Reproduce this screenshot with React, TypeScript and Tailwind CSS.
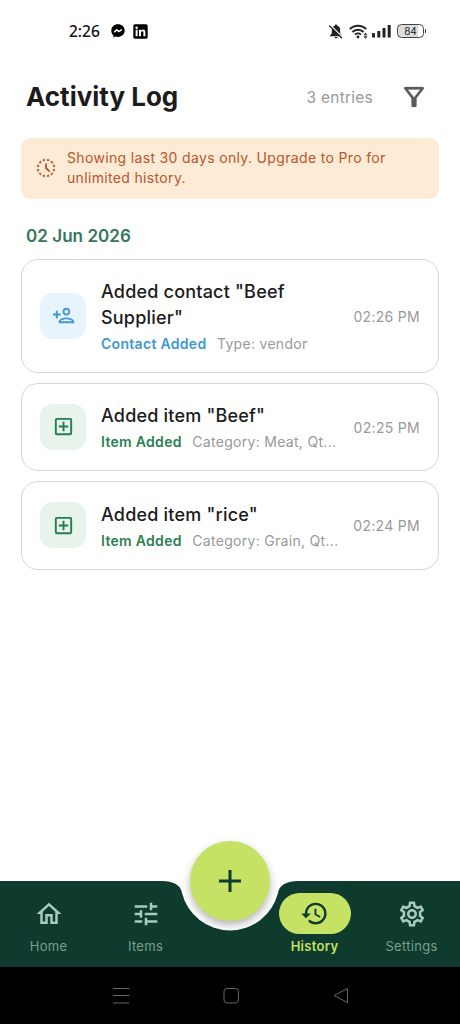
import React from "react";
import {
  MdHistory,
  MdHistoryToggleOff,
  MdOutlineAddBox,
  MdOutlineSettings,
  MdTune,
} from "react-icons/md";

const entries = [
  {
    title: 'Added contact "Beef Supplier"',
    kind: "contact",
    label: "Contact Added",
    detail: "Type: vendor",
    time: "02:26 PM",
  },
  {
    title: 'Added item "Beef"',
    kind: "item",
    label: "Item Added",
    detail: "Category: Meat, Qt...",
    time: "02:25 PM",
  },
  {
    title: 'Added item "rice"',
    kind: "item",
    label: "Item Added",
    detail: "Category: Grain, Qt...",
    time: "02:24 PM",
  },
];

const HomeIcon = () => (
  <svg viewBox="0 0 24 24" className="size-[30px]" fill="currentColor">
    <path d="M12 5.69l5 4.5V18h-2v-6H9v6H7v-7.81l5-4.5M12 3L2 12h3v8h6v-6h2v6h6v-8h3L12 3z" />
  </svg>
);

const PersonAddIcon = () => (
  <svg viewBox="0 0 24 24" className="size-[23px]" fill="currentColor">
    <path d="M15 12c2.21 0 4-1.79 4-4s-1.79-4-4-4-4 1.79-4 4 1.79 4 4 4zm0-6c1.1 0 2 .9 2 2s-.9 2-2 2-2-.9-2-2 .9-2 2-2zm0 8c-2.67 0-8 1.34-8 4v2h16v-2c0-2.66-5.33-4-8-4zm-6 4c.22-.72 3.31-2 6-2 2.7 0 5.8 1.29 6 2H9zm-3-3v-3h3v-2H6V7H4v3H1v2h3v3z" />
  </svg>
);

const FilterIcon = () => (
  <svg viewBox="0 0 24 24" className="size-[30px]" fill="currentColor">
    <path
      d="M7 6h10l-5.01 6.3L7 6zm-2.75-.39C6.27 8.2 10 13 10 13v6c0 .55.45 1 1 1h2c.55 0 1-.45 1-1v-6s3.72-4.8 5.74-7.39A.998.998 0 0 0 18.95 4H5.04c-.83 0-1.3.95-.79 1.61z"
      stroke="currentColor"
      strokeWidth="0.2"
    />
  </svg>
);

const StatusBar = () => (
  <div className="flex h-[62px] shrink-0 items-center pr-[34px] pl-[69px] text-[#111111]">
    <span className="w-8 font-['Noto_Sans'] text-[15.5px] leading-5 font-medium">
      2:26
    </span>
    {/* Messenger */}
    <svg viewBox="0 0 14 14" className="ml-[10px] size-[14px]">
      <path
        d="M7 .3C3.1.3.3 3 .3 6.7c0 1.9.8 3.5 2.1 4.7v2.2l2-1.1c.8.3 1.7.4 2.6.4 3.9 0 6.7-2.7 6.7-6.3S10.9.3 7 .3z"
        fill="#000"
      />
      <path
        d="M3.2 8.3l2.5-2.6 2.1 1.9 3-2"
        fill="none"
        stroke="#fff"
        strokeWidth="1.5"
      />
    </svg>
    {/* LinkedIn */}
    <svg viewBox="0 0 15 15" className="ml-[8px] size-[15px]">
      <rect x=".3" y=".3" width="14.4" height="14.4" rx="1.6" fill="#000" />
      <circle cx="3.6" cy="3.7" r="1.25" fill="#fff" />
      <path
        d="M2.6 5.8h2v6.4h-2zM6 5.8h1.9v.9c.4-.7 1.1-1.1 2-1.1 1.9 0 2.5 1.2 2.5 3v3.6h-2V9c0-.9-.1-1.7-1.1-1.7S8 8.1 8 9v3.2H6z"
        fill="#fff"
      />
    </svg>
    <div className="ml-auto flex items-center">
      {/* Muted bell */}
      <svg viewBox="0 0 14 15" className="h-[15px] w-[14px]">
        <path
          d="M7 .5c-.8 0-1.2.5-1.2 1.2C3.800 2.2 2.8 3.9 2.8 6v3.5L1 11.5v.8h12v-.8l-1.8-2V6c0-2.1-1-3.8-3-4.3C8.2 1 7.8.5 7 .5zM5.6 13a1.4 1.4 0 0 0 2.8 0z"
          fill="#222"
        />
        <path d="M1.2.9l12.4 12.4" stroke="#fff" strokeWidth="1.3" />
        <path d="M.3 1.6l12.6 12.6" stroke="#222" strokeWidth="1.3" />
      </svg>
      {/* Wi-Fi with traffic arrows */}
      <svg viewBox="0 0 19 15" className="ml-[6px] h-[15px] w-[19px]">
        <g fill="none" stroke="#222" strokeWidth="1.9">
          <path d="M.8 5.2a11.6 11.6 0 0 1 16.4 0" />
          <path d="M3.4 8a8 8 0 0 1 11.2 0" />
          <path d="M6 10.6a4.3 4.3 0 0 1 6 0" />
        </g>
        <circle cx="9" cy="13" r="1.4" fill="#222" />
        <path d="M16.5 8.8l2 2.5h-4zM16.5 14.7l2-2.5h-4z" fill="#222" />
      </svg>
      <svg viewBox="0 0 19 14" className="ml-[4px] h-[14px] w-[19px]" fill="#222">
        <rect x="0" y="9" width="3" height="4.5" rx=".5" />
        <rect x="5.3" y="7" width="3" height="6.5" rx=".5" />
        <rect x="10.5" y="4" width="3" height="9.5" rx=".5" />
        <rect x="15.7" y="1" width="3" height="12.5" rx=".5" />
      </svg>
      <div className="ml-[6px] flex h-[14px] w-[27px] items-center justify-center rounded-[4.5px] border border-[#444] bg-gradient-to-r from-[#dddddd] from-80% to-white to-80% text-[10px] leading-none text-[#222]">
        84
      </div>
      <div className="ml-px h-1 w-px bg-[#444]" />
    </div>
  </div>
);

const EntryCard = ({ entry }: { entry: (typeof entries)[number] }) => {
  const isContact = entry.kind === "contact";
  return (
    <div
      className={`flex items-center rounded-[17px] border border-[#d6d6d6] px-[18px] ${
        isContact ? "h-[114px]" : "h-[88.5px]"
      }`}
    >
      <div
        className={`flex size-[46px] shrink-0 items-center justify-center rounded-[13px] ${
          isContact ? "bg-[#e7f4fe] text-[#3f97d3]" : "bg-[#e7f3eb] text-[#237f4e]"
        }`}
      >
        {isContact ? <PersonAddIcon /> : <MdOutlineAddBox className="size-[23px]" />}
      </div>
      <div className="ml-[15px] w-[238px] shrink-0 pt-[2px]">
        <p className="text-[18px] leading-[26px] font-medium tracking-[0.2px] text-[#1c1c1c]">
          {entry.title}
        </p>
        <p className="mt-[3px] flex gap-[10.5px] text-[14px] leading-[20px] tracking-[0.3px] whitespace-nowrap">
          <span
            className={`font-semibold ${
              isContact ? "text-[#3f97d3]" : "text-[#2d8050]"
            }`}
          >
            {entry.label}
          </span>
          <span className="text-[#999999]">{entry.detail}</span>
        </p>
      </div>
      <span className="ml-auto pt-px text-[14px] tracking-[0.3px] whitespace-nowrap text-[#999999]">
        {entry.time}
      </span>
    </div>
  );
};

const BottomNav = () => (
  <nav className="relative h-[86px] shrink-0">
    <svg
      viewBox="0 0 460 86"
      className="absolute inset-0 h-[86px] w-[460px]"
      fill="#0e3b2e"
    >
      <path d="M0 0H162C173 0 181 4 182 12A49.5 49.5 0 0 0 278 12C279 4 287 0 298 0H460V86H0Z" />
    </svg>
    <div className="relative flex h-full pt-[12px] text-[13px] leading-5 tracking-[0.3px] text-[#7a9d8f]">
      <div className="flex w-[97px] flex-col items-center gap-[2px]">
        <span className="flex h-[41px] items-center text-[#a9cbbb]">
          <HomeIcon />
        </span>
        Home
      </div>
      <div className="flex w-[97px] flex-col items-center gap-[2px]">
        <span className="flex h-[41px] items-center text-[#a9cbbb]">
          <MdTune className="size-[30px]" />
        </span>
        Items
      </div>
      <div className="ml-auto flex w-[97px] flex-col items-center gap-[2px] font-semibold text-[#c5e265]">
        <span className="flex h-[41px] w-[72px] items-center justify-center rounded-full bg-[#c5e265] text-[#0e3b2e]">
          <MdHistory className="size-[29px]" />
        </span>
        History
      </div>
      <div className="flex w-[97px] flex-col items-center gap-[2px]">
        <span className="flex h-[41px] items-center text-[#a9cbbb]">
          <MdOutlineSettings className="size-[30px]" />
        </span>
        Settings
      </div>
    </div>
    <button className="absolute -top-10 left-[190px] flex size-20 items-center justify-center rounded-full bg-[#c5e265] shadow-[0_4px_8px_rgba(0,0,0,0.3)]">
      <svg viewBox="0 0 24 24" className="size-6" stroke="#0e3b2e" strokeWidth="3">
        <path d="M12 1v22M1 12h22" />
      </svg>
    </button>
  </nav>
);

const App = () => {
  return (
    <div className="flex h-[1024px] w-[460px] flex-col overflow-hidden bg-white font-['Inter',sans-serif]">
      <StatusBar />
      <main className="flex flex-1 flex-col px-[21px]">
        <header className="flex h-[70px] items-center pr-[10px] pl-[5px]">
          <h1 className="-mt-[2px] text-[26px] font-bold text-[#1c1c1c]">
            Activity Log
          </h1>
          <span className="ml-auto pt-px text-[15.5px] tracking-[0.25px] text-[#999999]">
            3 entries
          </span>
          <span className="ml-[26px] text-[#5b5b5b]">
            <FilterIcon />
          </span>
        </header>

        <div className="mt-[5.5px] flex h-[61px] shrink-0 items-center rounded-[9px] bg-[#feebd5] pl-[14px] text-[#b9552f]">
          <MdHistoryToggleOff className="size-[22px] shrink-0" />
          <p className="ml-[10px] w-[335px] text-[14px] leading-[20.5px] tracking-[0.34px]">
            Showing last 30 days only. Upgrade to Pro for unlimited history.
          </p>
        </div>

        <h2 className="mt-[26.5px] pl-[5px] text-[17px] leading-[23px] font-semibold tracking-[0.05px] text-[#34775a]">
          02 Jun 2026
        </h2>

        <div className="mt-[10.5px] flex flex-col gap-[10px]">
          {entries.map((entry) => (
            <EntryCard key={entry.time} entry={entry} />
          ))}
        </div>
      </main>

      <BottomNav />

      {/* System navigation */}
      <div className="flex h-[57px] shrink-0 items-center justify-center gap-[92px] bg-black pl-[2px]">
        <svg viewBox="0 0 18 18" className="size-[18px]" stroke="#666" fill="none">
          <path d="M1 1.5h16M1 8.5h16M1 16h16" />
        </svg>
        <svg viewBox="0 0 18 18" className="size-[18px]" stroke="#666" fill="none">
          <rect x="2" y="1.5" width="14.5" height="14.5" rx="3" />
        </svg>
        <svg viewBox="0 0 18 18" className="size-[18px]" stroke="#666" fill="none">
          <path d="M15.5 1.5v14L2 8.5z" strokeLinejoin="round" />
        </svg>
      </div>
    </div>
  );
};

export default App;
